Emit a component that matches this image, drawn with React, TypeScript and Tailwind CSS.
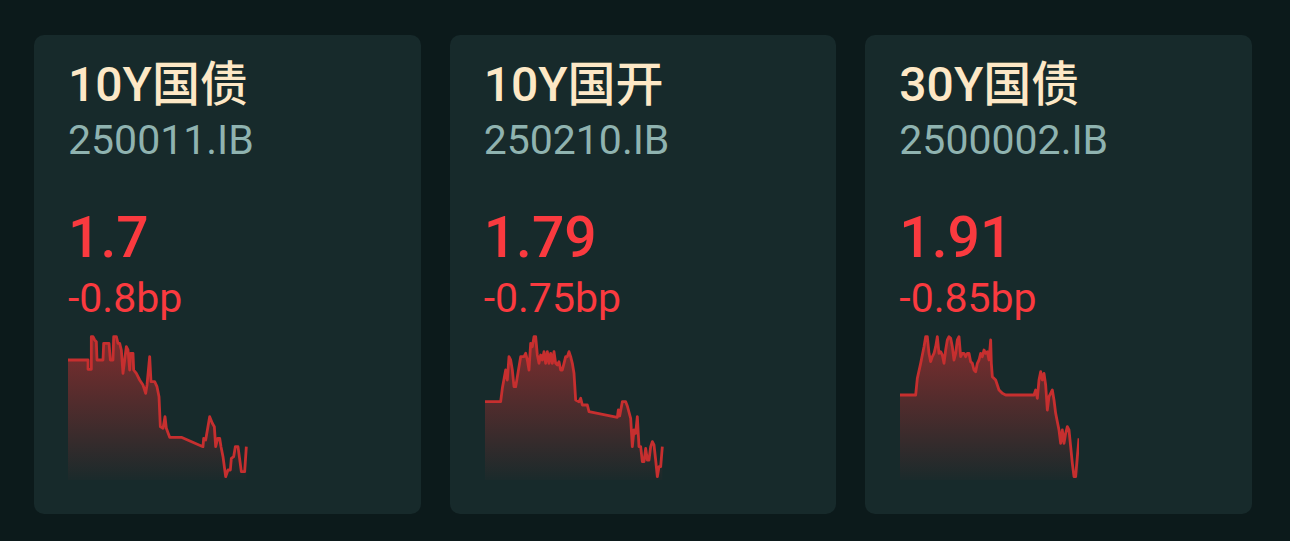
import React from "react";

type Bond = {
  name: string;
  code: string;
  yieldValue: string;
  change: string;
  points: [number, number][];
};

const bonds: Bond[] = [
  {
    name: "10Y国债",
    code: "250011.IB",
    yieldValue: "1.7",
    change: "-0.8bp",
    points: [
      [25, 90], [85, 90], [85, 118], [95, 118], [95, 20], [100, 20], [105, 30], [110, 35], [112, 90], [130, 90],
      [132, 40], [148, 40], [152, 90], [160, 90], [162, 20], [170, 20], [175, 40], [180, 40], [185, 60], [190, 130],
      [195, 90], [200, 50], [205, 60], [210, 120], [213, 70], [220, 70], [222, 120], [230, 130], [240, 150],
      [250, 165], [258, 190], [262, 165], [270, 80], [274, 155], [285, 155], [292, 170], [298, 200], [302, 290],
      [310, 295], [316, 260], [320, 295], [330, 322], [365, 322], [430, 350], [432, 325], [438, 330], [450, 260],
      [458, 280], [464, 290], [468, 350], [474, 325], [480, 325], [484, 350], [490, 380], [498, 440], [505, 420],
      [512, 420], [515, 385], [522, 380], [527, 350], [535, 350], [545, 425], [555, 425], [560, 350],
    ],
  },
  {
    name: "10Y国开",
    code: "250210.IB",
    yieldValue: "1.79",
    change: "-0.75bp",
    points: [
      [28, 215], [75, 215], [80, 175], [90, 120], [95, 150], [100, 80], [105, 90], [110, 120], [115, 170], [120, 170],
      [135, 80], [145, 80], [150, 70], [155, 90], [160, 120], [165, 40], [170, 50], [175, 20], [180, 20], [185, 75],
      [190, 100], [195, 75], [200, 90], [205, 65], [210, 100], [215, 65], [220, 100], [225, 70], [230, 100], [235, 65],
      [240, 100], [245, 105], [250, 95], [255, 120], [260, 120], [265, 100], [270, 80], [275, 80], [280, 65], [285, 80],
      [290, 100], [295, 130], [300, 210], [310, 215], [315, 205], [320, 225], [335, 225], [340, 245], [425, 262],
      [428, 240], [432, 258], [440, 215], [450, 215], [455, 228], [465, 265], [470, 350], [475, 300], [480, 310],
      [485, 260], [490, 350], [495, 350], [500, 395], [505, 395], [510, 355], [515, 390], [520, 390], [525, 350],
      [530, 335], [535, 345], [540, 390], [545, 440], [550, 410], [555, 410], [560, 350],
    ],
  },
  {
    name: "30Y国债",
    code: "2500002.IB",
    yieldValue: "1.91",
    change: "-0.85bp",
    points: [
      [28, 195], [75, 195], [80, 145], [90, 100], [95, 75], [100, 50], [105, 20], [110, 20], [115, 70], [120, 95],
      [125, 80], [130, 70], [135, 50], [140, 20], [145, 70], [150, 65], [155, 75], [160, 100], [165, 60], [170, 30],
      [175, 20], [180, 25], [185, 50], [190, 90], [195, 70], [200, 30], [205, 20], [210, 80], [215, 70], [220, 70],
      [225, 80], [230, 70], [235, 70], [240, 95], [245, 100], [250, 120], [255, 125], [260, 100], [265, 90], [270, 70],
      [275, 80], [280, 60], [285, 70], [290, 65], [295, 90], [300, 30], [302, 100], [305, 140], [315, 150], [320, 165],
      [325, 180], [335, 190], [345, 195], [430, 195], [435, 180], [440, 205], [445, 150], [450, 125], [455, 150],
      [460, 130], [465, 165], [470, 240], [475, 200], [480, 190], [485, 180], [490, 210], [495, 250], [500, 275],
      [505, 300], [510, 340], [515, 300], [520, 340], [525, 310], [530, 290], [535, 300], [540, 350], [545, 400],
      [550, 440], [555, 440], [560, 380], [565, 325],
    ],
  },
];

function Sparkline({ points, id }: { points: [number, number][]; id: string }) {
  const line = points.map(([x, y]) => `${x},${y}`).join(" ");
  const first = points[0];
  const last = points[points.length - 1];
  const area = `${first[0]},450 ${line} ${last[0]},450`;

  return (
    <svg width="180" height="150" viewBox="25 0 540 450" preserveAspectRatio="none" className="block">
      <defs>
        <linearGradient id={id} x1="0" y1="0" x2="0" y2="450" gradientUnits="userSpaceOnUse">
          <stop offset="0" stopColor="#c83030" stopOpacity="0.62" />
          <stop offset="1" stopColor="#c83030" stopOpacity="0.02" />
        </linearGradient>
      </defs>
      <polygon points={area} fill={`url(#${id})`} />
      <polyline
        points={line}
        fill="none"
        stroke="#c62f2f"
        strokeWidth="2.8"
        strokeLinejoin="round"
        vectorEffect="non-scaling-stroke"
      />
    </svg>
  );
}

function BondCard({ bond, idx }: { bond: Bond; idx: number }) {
  return (
    <div className="h-[479px] rounded-[10px] bg-[#172a2b] px-[34px] pt-[26px]">
      <div className="text-[48px] font-medium leading-none text-[#fde8c6]">{bond.name}</div>
      <div className="mt-[11px] text-[41px] leading-none text-[#8fb3b0]">{bond.code}</div>
      <div className="mt-[48px] text-[57px] font-medium leading-none text-[#fa3a3f]">{bond.yieldValue}</div>
      <div className="mt-[12px] text-[41px] leading-none text-[#fa3a3f]">{bond.change}</div>
      <div className="mt-[11px]">
        <Sparkline points={bond.points} id={`fill-${idx}`} />
      </div>
    </div>
  );
}

export default function App() {
  return (
    <div
      className="h-[541px] w-[1290px] bg-[#0c1a1b] pl-[34px] pr-[38px] pt-[35px]"
      style={{ fontFamily: 'Roboto, "Noto Sans CJK SC", sans-serif' }}
    >
      <div className="grid grid-cols-3 gap-[29px]">
        {bonds.map((b, i) => (
          <BondCard key={b.code} bond={b} idx={i} />
        ))}
      </div>
    </div>
  );
}
